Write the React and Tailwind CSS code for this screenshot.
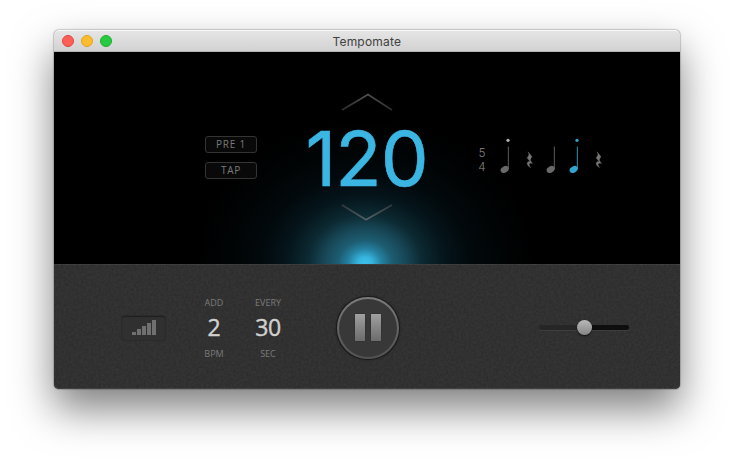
import React from "react";

function TitleBar() {
  return (
    <header className="flex h-[22px] items-center rounded-t-[5px] border-b border-[#b4b4b4] bg-linear-to-b from-[#e6e6e6] to-[#d2d2d2] pl-[7.6px] shadow-[inset_0_1px_0_#f8f8f8]">
      <div className="flex w-[50px] gap-[7px]">
        <span className="h-3 w-3 rounded-full border border-[#e2463f] bg-[#ff5f57]" />
        <span className="h-3 w-3 rounded-full border border-[#e1a325] bg-[#ffbd2e]" />
        <span className="h-3 w-3 rounded-full border border-[#1dad2b] bg-[#28ca41]" />
      </div>
      <h1 className="mr-[58px] flex-1 pt-[3px] text-center font-['Inter',sans-serif] text-[12px] leading-[18px] tracking-[0.2px] text-[#404040]">
        Tempomate
      </h1>
    </header>
  );
}

function OutlineButton({ children }) {
  return (
    <button className="h-[17px] w-[52px] rounded-[3px] border border-[#343434] bg-[#090909] text-center text-[10px] leading-[15px] tracking-[0.8px] text-[#7a7a7a]">
      {children}
    </button>
  );
}

function Chevron({ down = false }) {
  return (
    <svg width="52" height="18" viewBox="0 0 52 18" fill="none" className="block">
      <defs>
        <linearGradient id={down ? "cd" : "cu"} x1="0" x2="1" y1="0" y2="0">
          <stop offset="0" stopColor={down ? "#30383b" : "#2c2c2c"} />
          <stop offset=".5" stopColor={down ? "#566267" : "#505050"} />
          <stop offset="1" stopColor={down ? "#30383b" : "#2c2c2c"} />
        </linearGradient>
      </defs>
      <path
        d={down ? "M1 1 L25 15.7 L51 1" : "M1 17 L27 1.5 L51 17"}
        stroke={down ? "url(#cd)" : "url(#cu)"}
        strokeWidth="1.7"
      />
    </svg>
  );
}

function Note({ color, stem, dot }) {
  return (
    <svg width="10" height="38" viewBox="0 0 10 38" className="block">
      {dot && <circle cx="8" cy="3.3" r="1.6" fill={dot} />}
      <path d="M8.4 9.5V32" stroke={stem} strokeWidth="1.2" />
      <ellipse cx="4.7" cy="32.4" rx="4.3" ry="3.1" transform="rotate(-28 4.7 32.4)" fill={color} />
    </svg>
  );
}

function Rest() {
  return (
    <svg width="7" height="38" viewBox="-.8 0 7 38" className="block">
      <path
        d="M1.2 14.8L4.9 19.3C5.2 19.8 5 20.2 4.4 20.9C3.4 22.1 3.4 23.2 4.3 24.5L5.7 26.6C4 26 2.6 26.1 2.4 27.3C2.3 28.2 2.9 29.2 3.8 30.6C1.8 29.5.2 27.9.4 26.2C.6 24.8 2 24.3 3.5 24.8L.6 21.3C.2 20.7.5 20.3 1.1 19.7C2.5 18.2 2.4 16.8 1.2 14.8Z"
        fill="#757575"
        stroke="#757575"
        strokeWidth=".35"
      />
    </svg>
  );
}

function Pattern() {
  return (
    <div className="mt-[85px] ml-[46px] flex">
      <div className="mt-[9px] w-[22px] pl-[0.5px] font-['Roboto',sans-serif] text-[12px] leading-[14px] font-light text-[#8f8f8f]">
        <div>5</div>
        <div>4</div>
      </div>
      <div className="flex">
        <div className="w-[26px]"><Note color="#696969" stem="#4c4c4c" dot="#b4b4b4" /></div>
        <div className="w-5"><Rest /></div>
        <div className="w-[23px]"><Note color="#696969" stem="#4c4c4c" /></div>
        <div className="w-[26px]"><Note color="#30a5cf" stem="#237b99" dot="#30a5cf" /></div>
        <Rest />
      </div>
    </div>
  );
}

function Display() {
  return (
    <section className="flex h-[212px] bg-black bg-[radial-gradient(168px_142px_at_311px_211px,#3cc0eb_0%,#37b5df_4%,#2580a0_10%,#1d5d72_16%,#184858_24%,#0c2932_34%,#05151b_47%,#02090c_62%,#010405_80%,#000_100%)]">
      <div className="mt-[84px] ml-[151px] flex h-[43px] w-[52px] flex-col justify-between">
        <OutlineButton>PRE 1</OutlineButton>
        <OutlineButton>TAP</OutlineButton>
      </div>
      <div className="ml-[41px] flex w-[134px] flex-col items-center pt-[41px]">
        <div className="mr-[-4px]"><Chevron /></div>
        <div className="mt-[10px] mb-[8px] h-[75px] w-full pl-[3px] text-center font-['Inter',sans-serif] text-[76px] leading-[75px] font-normal tracking-[-1px] whitespace-nowrap text-[#3bb6e3] [-webkit-text-stroke:0.6px_#3bb6e3]">
          120
        </div>
        <div className="mr-[-4px]"><Chevron down /></div>
      </div>
      <Pattern />
    </section>
  );
}

function Stepper({ top, value, bottom }) {
  return (
    <div className="flex w-[54px] flex-col items-center text-[9px] leading-[12px] text-[#7b7b7b]">
      <span>{top}</span>
      <span className="mt-[4px] mb-[6px] text-[23px] leading-[29px] tracking-[-0.4px] text-[#d0d0d0] [-webkit-text-stroke:0.4px_#d0d0d0]">{value}</span>
      <span>{bottom}</span>
    </div>
  );
}

function Controls() {
  return (
    <section className="relative h-[125px] overflow-hidden rounded-b-[5px] bg-[#343434] shadow-[inset_0_1px_0_#414141,inset_0_-1px_0_#454545]">
      <svg className="absolute inset-0 h-full w-full opacity-[0.12]" aria-hidden="true">
        <filter id="grain">
          <feTurbulence type="fractalNoise" baseFrequency=".4" numOctaves="2" seed="4" />
          <feColorMatrix values="0 0 0 0 0  0 0 0 0 0  0 0 0 0 0  2.4 0 0 0 -.8" />
        </filter>
        <rect width="100%" height="100%" filter="url(#grain)" />
      </svg>
      <div className="relative flex">
        <div className="mt-[51px] ml-[67px] flex h-[26px] w-[45px] items-end rounded-[3px] border border-[#2a2a2a] bg-[#303030] pb-[5px] pl-[10px] shadow-[inset_0_1px_1px_#202020]">
          <div className="flex items-end gap-px">
            <span className="h-[3px] w-1 bg-[#707070]" />
            <span className="h-[6px] w-1 bg-[#707070]" />
            <span className="h-[9px] w-1 bg-[#707070]" />
            <span className="h-[12px] w-1 bg-[#707070]" />
            <span className="h-[15px] w-1 bg-[#707070]" />
          </div>
        </div>
        <div className="mt-[33px] ml-[21px] flex">
          <Stepper top="ADD" value="2" bottom="BPM" />
          <Stepper top="EVERY" value="30" bottom="SEC" />
        </div>
        <button className="mt-[32.5px] ml-[41.5px] flex h-[62px] w-[62px] items-center justify-center rounded-full bg-linear-to-b from-[#7b7b7b] to-[#515151] p-[2px] shadow-[0_0_0_1px_#1c1c1c,0_0_2px_1px_#1c1c1c]">
          <span className="flex h-full w-full items-center justify-center gap-[6px] rounded-full bg-[#383838]">
            <span className="h-[27px] w-[10px] bg-linear-to-b from-[#a0a0a0] to-[#6c6c6c] shadow-[0_0_1px_#222]" />
            <span className="h-[27px] w-[10px] bg-linear-to-b from-[#a0a0a0] to-[#6c6c6c] shadow-[0_0_1px_#222]" />
          </span>
        </button>
        <div className="mt-[55px] ml-[140.5px] flex h-4 w-[90px] items-center">
          <div className="h-[5px] w-[38px] rounded-l-full bg-[#262626] shadow-[0_1px_0_#3e3e3e]" />
          <div className="h-[15px] w-[15px] rounded-full bg-linear-to-b from-[#bababa] to-[#858585] shadow-[0_1px_2px_#111]" />
          <div className="h-[5px] w-[37px] rounded-r-full bg-[#0e0e0e] shadow-[0_1px_0_#3e3e3e]" />
        </div>
      </div>
    </section>
  );
}

export default function App() {
  return (
    <main className="h-[466px] w-[734px] overflow-hidden bg-white px-[54px] pt-[30px] font-['Open_Sans',sans-serif]">
      <div className="h-[359px] rounded-[5px] bg-[#303030] shadow-[0_0_1px_1px_rgba(0,0,0,0.18),0_20px_40px_rgba(0,0,0,0.5)]">
        <TitleBar />
        <Display />
        <Controls />
      </div>
    </main>
  );
}
